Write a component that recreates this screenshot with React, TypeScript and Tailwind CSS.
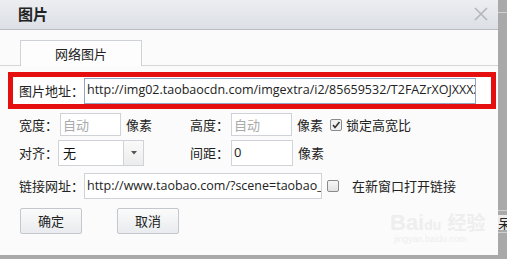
import React from "react";

const cjk = { fontFamily: '"Noto Sans CJK SC", sans-serif' };
const latin = { fontFamily: '"Open Sans", "Noto Sans CJK SC", sans-serif' };

export default function App() {
  return (
    <div className="relative w-[507px] h-[259px] overflow-hidden bg-[#a9a9a9]" style={cjk}>
      <div className="absolute left-0 top-0 w-[498px] h-[255px] bg-[#fbfbfb] flex flex-col">
        {/* header */}
        <div className="h-[30px] shrink-0 flex items-center justify-between pl-[18px] pr-[9px] bg-gradient-to-b from-[#eceef1] to-[#dcdfe4] border-b border-[#b9bcc1]">
          <span className="text-[15px] font-bold text-[#222]">图片</span>
          <svg width="16" height="16" viewBox="0 0 16 16" className="mb-[2px]">
            <path d="M2 2 L14 14 M14 2 L2 14" stroke="#b3b6ba" strokeWidth="1.6" />
          </svg>
        </div>
        {/* tabs */}
        <div className="mt-[10px] h-[26px] flex border-b border-[#d6d6d6] pl-[20px]">
          <div className="w-[122px] h-[26px] border border-b-0 border-[#cfd2d6] bg-[#fdfdfd] flex items-center justify-center text-[13px] text-[#222]">
            网络图片
          </div>
        </div>
        {/* red box row */}
        <div className="mt-[6px] ml-[8px] w-[488px] h-[37px] border-[5px] border-[#e60f0f] bg-white flex items-center pl-[6px]">
          <span className="w-[65px] text-[13px] text-[#222] whitespace-nowrap">图片地址：</span>
          <div className="w-[392px] h-[26px] border border-[#90a4c4] flex items-center pl-[2px] overflow-hidden whitespace-nowrap text-[12.5px] text-[#222]" style={latin}>
            http://img02.taobaocdn.com/imgextra/i2/85659532/T2FAZrXOJXXXXX
          </div>
        </div>
        {/* width/height row */}
        <div className="mt-[4px] flex items-center h-[23px] text-[13px] text-[#222]">
          <span className="ml-[19px] w-[41px]">宽度：</span>
          <div className="w-[61px] h-[23px] border border-[#cfd2d6] bg-white flex items-center pl-[2px] text-[#aaa]">自动</div>
          <span className="ml-[5px] w-[64px]">像素</span>
          <span className="w-[41px]">高度：</span>
          <div className="w-[61px] h-[23px] border border-[#cfd2d6] bg-white flex items-center pl-[2px] text-[#aaa]">自动</div>
          <span className="ml-[5px] w-[33px]">像素</span>
          <div className="w-[12px] h-[12px] border border-[#8a8a8a] rounded-[2px] bg-[#f0f0f0] flex items-center justify-center">
            <svg width="10" height="10" viewBox="0 0 10 10"><path d="M2 5 L4 7.5 L8.5 2" fill="none" stroke="#333" strokeWidth="1.6" /></svg>
          </div>
          <span className="ml-[4px]">锁定高宽比</span>
        </div>
        {/* align row */}
        <div className="mt-[4px] flex items-center h-[26px] text-[13px] text-[#222]">
          <span className="ml-[19px] w-[39px]">对齐：</span>
          <div className="w-[86px] h-[26px] border border-[#cfd2d6] bg-white flex">
            <div className="flex-1 flex items-center pl-[4px] text-[#111]">无</div>
            <div className="w-[20px] border-l border-[#cfd2d6] bg-gradient-to-b from-[#fafafa] to-[#ececec] flex items-center justify-center">
              <svg width="6" height="4" viewBox="0 0 6 4"><path d="M0 0 L6 0 L3 3.5 Z" fill="#555" /></svg>
            </div>
          </div>
          <span className="ml-[46px] w-[41px]">间距：</span>
          <div className="w-[62px] h-[26px] border border-[#cfd2d6] bg-white flex items-center pl-[2px]" style={latin}>0</div>
          <span className="ml-[5px]">像素</span>
        </div>
        {/* link row */}
        <div className="mt-[7px] flex items-center h-[26px] text-[13px] text-[#222]">
          <span className="ml-[19px] w-[65px] whitespace-nowrap">链接网址：</span>
          <div className="w-[238px] h-[26px] border border-[#cfd2d6] bg-white flex items-center pl-[2px] overflow-hidden whitespace-nowrap text-[12.5px]" style={latin}>
            http://www.taobao.com/?scene=taobao_s
          </div>
          <div className="ml-[5px] w-[12px] h-[12px] border border-[#8a8a8a] rounded-[2px] bg-gradient-to-b from-[#f7f7f7] to-[#e2e2e2]" />
          <span className="ml-[13px]">在新窗口打开链接</span>
        </div>
        {/* buttons */}
        <div className="mt-[9px] flex items-center ml-[20px] gap-[35px]">
          <div className="w-[62px] h-[26px] border border-[#c4c7cc] rounded-[2px] bg-gradient-to-b from-[#fbfbfb] to-[#e9ebee] flex items-center justify-center text-[13px] text-[#222]">确定</div>
          <div className="w-[62px] h-[26px] border border-[#c4c7cc] rounded-[2px] bg-gradient-to-b from-[#fbfbfb] to-[#e9ebee] flex items-center justify-center text-[13px] text-[#222]">取消</div>
        </div>
      </div>
      {/* watermark */}
      <div className="absolute left-[390px] top-[212px] text-[#eeeeee] leading-none">
        <div className="text-[22px] font-bold" style={{ fontFamily: '"Liberation Sans", sans-serif' }}>Bai<span className="text-[14px]">du</span> <span style={cjk} className="text-[19px]">经验</span></div>
        <div className="text-[9px] ml-[4px] mt-[1px]" style={{ fontFamily: '"Liberation Sans", sans-serif' }}>jingyan.baidu.com</div>
      </div>
      {/* right strip details */}
      <div className="absolute left-[498px] top-[12px] w-[9px] h-px bg-[#d0d0d0]" />
      <div className="absolute left-[498px] top-[210px] w-[9px] h-px bg-[#d0d0d0]" />
      <div className="absolute left-[498px] top-[215px] w-[9px] h-[15px] bg-[#ececec] text-[13px] leading-[15px] text-[#222] overflow-hidden whitespace-nowrap">呆</div>
      <div className="absolute left-[498px] top-[232px] w-[9px] h-px bg-[#d0d0d0]" />
    </div>
  );
}
